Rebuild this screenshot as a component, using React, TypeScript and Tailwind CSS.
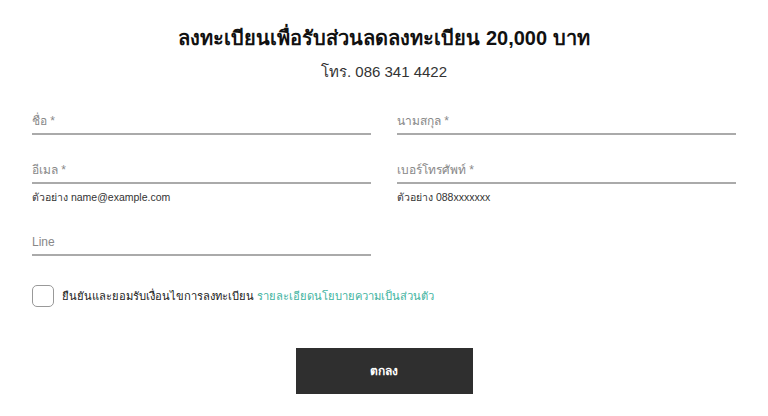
export default function App() {
  const font = { fontFamily: '"Liberation Sans", "Noto Sans", sans-serif' }

  return (
    <div className="w-[768px] h-[416px] bg-white text-[#222]" style={font}>
      <div className="px-8 pt-[23px]">
        <h1 className="text-center text-[20px] leading-[30px] font-bold text-[#111]">
          ลงทะเบียนเพื่อรับส่วนลดลงทะเบียน 20,000 บาท
        </h1>
        <p className="text-center text-[15px] leading-[22px] mt-[8px] text-[#333]">โทร. 086 341 4422</p>

        <form className="mt-[28px]">
          <div className="grid grid-cols-2 gap-x-[26px]">
            <Field label="ชื่อ *" />
            <Field label="นามสกุล *" />
            <div className="mt-[25px]">
              <Field label="อีเมล *" />
              <p className="mt-[5px] text-[10.5px] leading-4 text-[#333]">ตัวอย่าง name@example.com</p>
            </div>
            <div className="mt-[25px]">
              <Field label="เบอร์โทรศัพท์ *" />
              <p className="mt-[5px] text-[10.5px] leading-4 text-[#333]">ตัวอย่าง 088xxxxxxx</p>
            </div>
            <div className="mt-[27px]">
              <Field label="Line" />
            </div>
          </div>

          <label className="mt-[29px] flex items-center gap-2">
            <span className="w-[22px] h-[22px] rounded-[5px] border border-[#999] bg-white"></span>
            <span className="text-[11.2px] leading-5 text-[#222]">
              ยืนยันและยอมรับเงื่อนไขการลงทะเบียน{' '}
              <a className="text-[#3fb39f]">รายละเอียดนโยบายความเป็นส่วนตัว</a>
            </span>
          </label>

          <div className="mt-[41px] flex justify-center">
            <button
              type="button"
              className="w-[177px] h-[46px] bg-[#2f2f2f] text-white text-[12px] font-bold"
            >
              ตกลง
            </button>
          </div>
        </form>
      </div>
    </div>
  )
}

function Field({ label }: { label: string }) {
  return (
    <div className="border-b-2 border-[#aaa] pb-[2px]">
      <span className="block text-[12px] leading-5 text-[#888]">{label}</span>
    </div>
  )
}
